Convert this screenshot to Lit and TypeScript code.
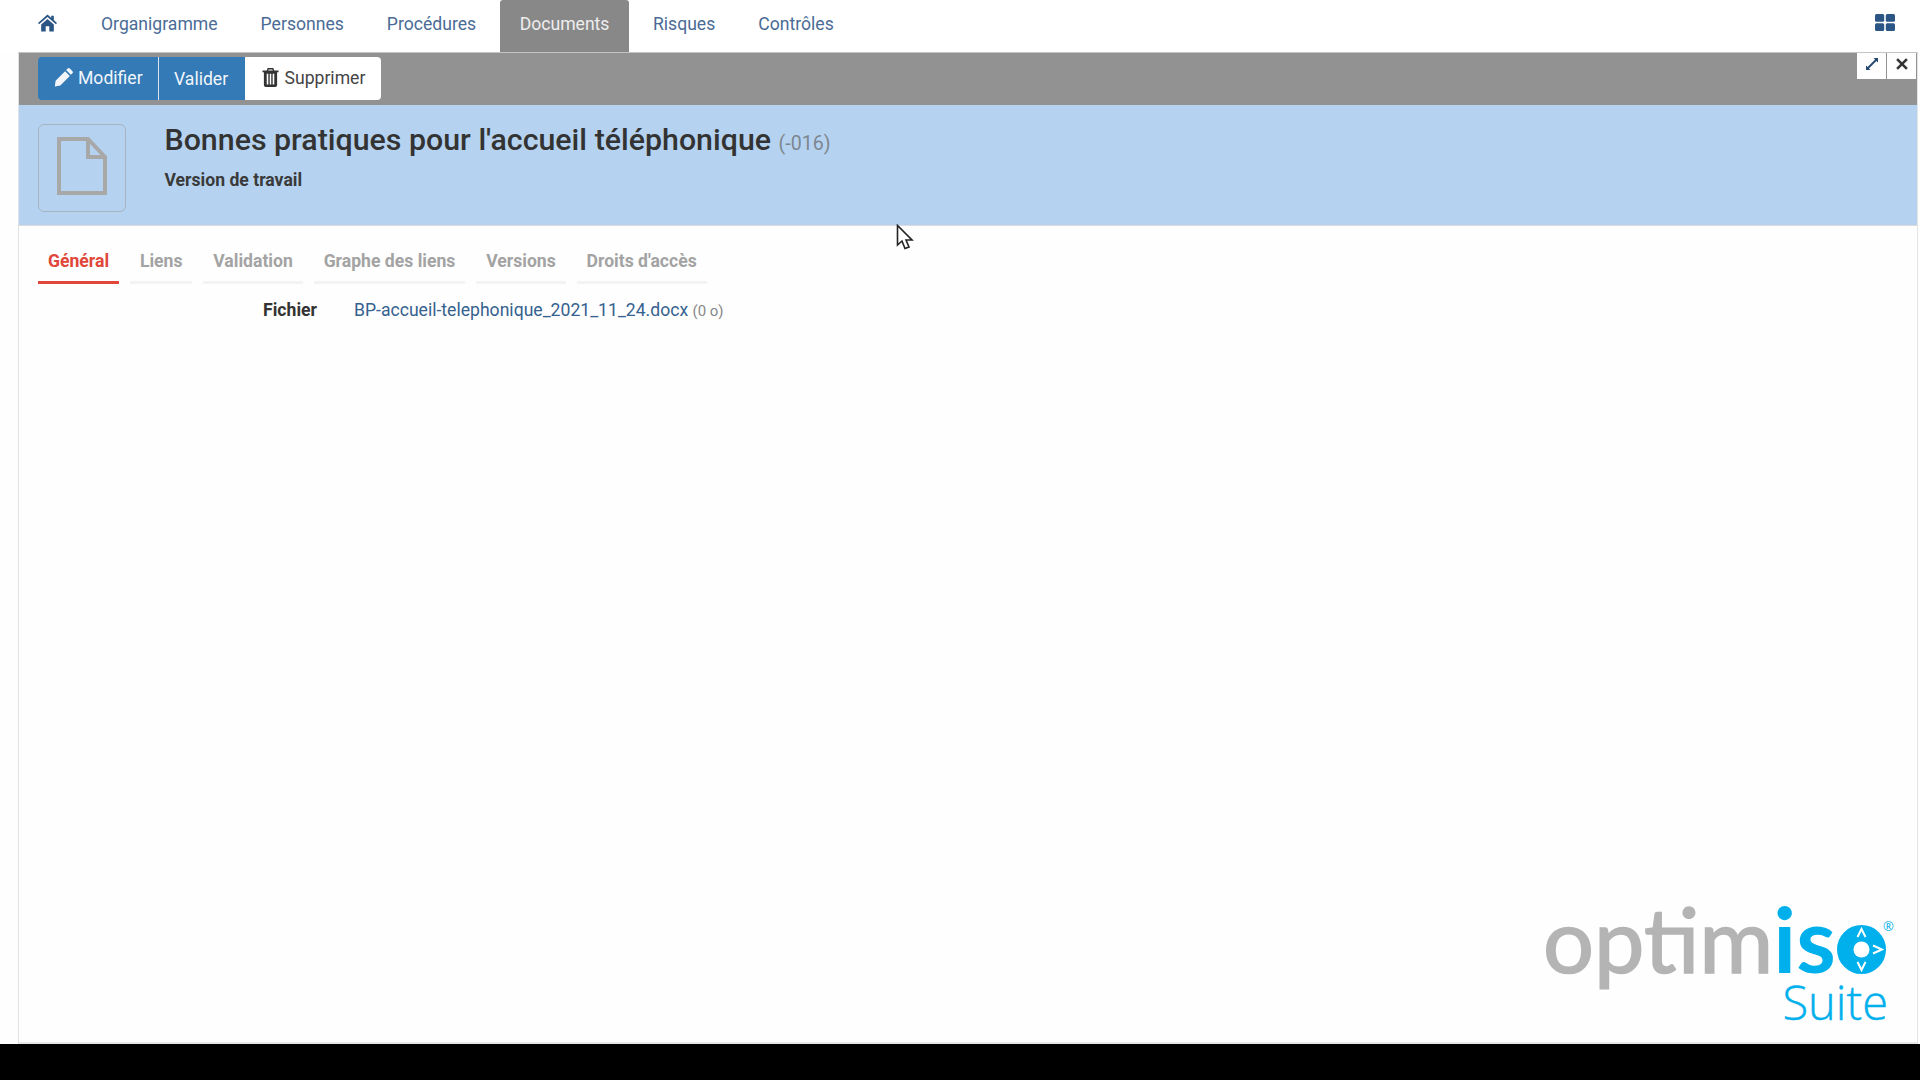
import { LitElement, html, css } from "lit";
import { customElement } from "lit/decorators.js";

const NAV = ["Organigramme", "Personnes", "Procédures", "Documents", "Risques", "Contrôles"];
const TABS = ["Général", "Liens", "Validation", "Graphe des liens", "Versions", "Droits d'accès"];

@customElement("app-root")
export class AppRoot extends LitElement {
  static styles = css`
    :host { display: block; width: 1920px; height: 1080px; overflow: hidden; position: relative; background: #000; font-family: Roboto, "Liberation Sans", sans-serif; }
    .page { height: 1044px; background: #fefefe; display: flex; flex-direction: column; }
    .nav { height: 52px; flex: none; display: flex; align-items: stretch; padding-left: 38px; background: #fff; }
    .home { width: 19px; margin-right: 24px; padding-top: 14px; }
    .home svg { width: 19px; height: 18px; fill: #2a5585; display: block; }
    .nav-item { padding: 0 20px; margin-right: 3px; font-size: 17.6px; line-height: 49px; color: #4a6b96; }
    .nav-item.active { background: #888; color: #eee; border-radius: 3px 3px 0 0; margin-left: .5px; margin-right: 3.5px; }
    .grid { margin-left: auto; margin-right: 25px; padding-top: 14px; }
    .grid svg { width: 20px; height: 17px; fill: #2a5585; display: block; }
    .panel { flex: 1; margin: 0 2px 0 18px; border-left: 1px solid #dfe3e8; border-right: 1px solid #e4e4e4; border-bottom: 2px solid #e8e8e8; border-top: 1px solid #c4c4c4; display: flex; flex-direction: column; min-height: 0; position: relative; }
    .bar { height: 52px; box-sizing: border-box; flex: none; background: #929292; padding: 4px 0 0 19px; display: flex; align-items: flex-start; }
    .btns { display: flex; height: 43px; border-radius: 4px; overflow: hidden; font-size: 17.6px; }
    .btn { display: flex; align-items: center; box-sizing: border-box; background: #337ab7; color: #f2f6fa; }
    .btn svg { fill: currentColor; flex: none; margin-top: -3px; }
    .btn span { margin-top: -2px; }
    .btn.first { width: 121px; padding-left: 16px; gap: 5px; border-right: 1px solid #dbe6f0; }
    .btn.mid { width: 86px; padding-left: 15px; }
    .btn.mid span { margin-top: 0; }
    .btn.light { background: #fff; color: #444; width: 136px; padding-left: 17px; gap: 5.5px; }
    .win { position: absolute; top: 0; right: 1px; display: flex; gap: 1px; }
    .win div { width: 29px; height: 26px; padding-bottom: 5px; box-sizing: border-box; background: #fefefe; display: flex; align-items: center; justify-content: center; }
    .win svg { width: 14px; height: 14px; }
    .head { height: 120px; flex: none; background: #b5d3f0; border-bottom: 1px solid #dcdcdc; display: flex; padding-left: 19px; }
    .doc { width: 88px; height: 88px; margin-top: 19px; padding-bottom: 4px; box-sizing: border-box; border: 1px solid #a7b4c0; border-radius: 6px; display: flex; align-items: center; justify-content: center; flex: none; }
    .doc svg { width: 50px; height: 58px; }
    .head-text { margin-left: 38.5px; padding-top: 17px; }
    h1 { margin: 0; font-weight: 500; font-size: 30.35px; line-height: 36px; color: #333; white-space: nowrap; }
    h1 small { font-weight: 400; font-size: 19.6px; color: #7d8790; }
    .sub { margin-top: 8px; font-size: 17.6px; font-weight: 700; line-height: 20px; color: #3a3a3a; }
    .tabs { display: flex; padding: 18px 0 0 19px; }
    .tab { padding: 0 10px; height: 37px; line-height: 34px; font-size: 17.6px; font-weight: 700; color: #a3a3a3; border-bottom: 3px solid #f3f3f3; margin-right: 10.8px; }
    .tab.on { color: #e0463a; border-bottom-color: #e0463a; }
    .row { display: flex; margin-top: 14px; font-size: 17.6px; line-height: 24px; }
    .label { width: 298px; text-align: right; font-weight: 700; color: #333; flex: none; }
    .val { margin-left: 37px; color: #35618f; }
    .val small { color: #888; font-size: 15px; }
    .spacer { flex: 1; }
    .logo { flex: none; align-self: flex-end; width: 345px; height: 124px; margin: 0 26px 18px 0; position: relative; }
    .logo .word { position: absolute; left: -3px; top: -2px; font-family: Lato, sans-serif; font-size: 90px; line-height: 80px; color: #b4b4b4; -webkit-text-stroke: 1.6px #b4b4b4; white-space: nowrap; }
    .logo .word b { font-weight: 700; color: #00b0ec; -webkit-text-stroke: 0; }
    .logo .suite { position: absolute; right: 3px; top: 78px; font-family: "Open Sans", sans-serif; font-size: 47px; line-height: 48px; font-weight: 300; color: #00b0ec; -webkit-text-stroke: .4px #00b0ec; }
    .logo svg { position: absolute; left: 291px; top: 25px; width: 49px; height: 49px; }
    .logo .reg { position: absolute; left: 337px; top: 18px; font-family: "Open Sans", sans-serif; font-size: 13px; line-height: 16px; color: #00b0ec; }
    .cursor { position: absolute; left: 896px; top: 224px; width: 20px; height: 28px; }
  `;

  render() {
    return html`
      <div class="page">
        <div class="nav">
          <div class="home"><svg viewBox="0 0 18 16"><path d="M9 0 L12.5 3 V1.2 H15 V5.2 L18 8 L17 9.2 L9 2.4 L1 9.2 L0 8 Z M3 9.4 L9 4.2 L15 9.4 V16 H10.7 V11 H7.3 V16 H3 Z"/></svg></div>
          ${NAV.map(n => html`<div class="nav-item ${n === "Documents" ? "active" : ""}">${n}</div>`)}
          <div class="grid"><svg viewBox="0 0 20 17"><rect width="9.2" height="7.8" rx="1.5"/><rect x="10.8" width="9.2" height="7.8" rx="1.5"/><rect y="9.2" width="9.2" height="7.8" rx="1.5"/><rect x="10.8" y="9.2" width="9.2" height="7.8" rx="1.5"/></svg></div>
        </div>
        <div class="panel">
          <div class="bar">
            <div class="btns">
              <div class="btn first"><svg width="19" height="19" viewBox="0 0 18 18"><path d="M13 .5 A1.5 1.5 0 0 1 15 .5 L17.5 3 A1.5 1.5 0 0 1 17.5 5 L16 6.5 L11.5 2 Z M10.5 3 L15 7.5 L6 16.5 L.8 17.5 L1.5 12 Z"/></svg><span>Modifier</span></div>
              <div class="btn mid"><span>Valider</span></div>
              <div class="btn light"><svg width="17" height="19" viewBox="0 0 18 20"><path d="M6 0 H12 L13 2.5 H17.5 V4.5 H16 V18 A2 2 0 0 1 14 20 H4 A2 2 0 0 1 2 18 V4.5 H.5 V2.5 H5 Z M7 1.5 L6.6 2.5 H11.4 L11 1.5 Z M5 6 V17.5 H6.7 V6 Z M8.2 6 V17.5 H9.8 V6 Z M11.3 6 V17.5 H13 V6 Z" fill="#333" fill-rule="evenodd"/></svg><span>Supprimer</span></div>
            </div>
          </div>
          <div class="win">
            <div><svg viewBox="0 0 14 14"><path d="M8.5 1 H13 V5.5 L11.4 3.9 L3.9 11.4 L5.5 13 H1 V8.5 L2.6 10.1 L10.1 2.6 Z" fill="#24476e"/></svg></div>
            <div><svg viewBox="0 0 14 14"><path d="M3 1.2 L7 5.2 L11 1.2 L12.8 3 L8.8 7 L12.8 11 L11 12.8 L7 8.8 L3 12.8 L1.2 11 L5.2 7 L1.2 3 Z" fill="#333"/></svg></div>
          </div>
          <div class="head">
            <div class="doc"><svg viewBox="0 0 50 58" fill="none" stroke="#a8a8a8" stroke-width="4"><path d="M2 2 H31 L48 20 V56 H2 Z"/><path d="M31 2 V20 H48"/></svg></div>
            <div class="head-text">
              <h1>Bonnes pratiques pour l'accueil téléphonique <small>(-016)</small></h1>
              <div class="sub">Version de travail</div>
            </div>
          </div>
          <div class="tabs">${TABS.map((t, i) => html`<div class="tab ${i === 0 ? "on" : ""}">${t}</div>`)}</div>
          <div class="row"><div class="label">Fichier</div><div class="val">BP-accueil-telephonique_2021_11_24.docx <small>(0 o)</small></div></div>
          <div class="spacer"></div>
          <div class="logo">
            <div class="word">optim<b>is</b></div>
            <svg viewBox="0 0 49 49"><circle cx="24.5" cy="24.5" r="24.5" fill="#00b0ec"/><circle cx="24.5" cy="24.5" r="8" fill="#fff"/><path d="M20.5 12 L24.5 4 L28.5 12 M20.5 37 L24.5 45 L28.5 37 M36 20.5 L45 24.5 L36 28.5" fill="none" stroke="#fff" stroke-width="2"/></svg>
            <div class="reg">®</div>
            <div class="suite">Suite</div>
          </div>
        </div>
      </div>
      <svg class="cursor" viewBox="0 0 20 28"><path d="M1.5 1.5 V21 L6 17 L9 24.5 L13 23 L10 16 H16 Z" fill="#fff" stroke="#222" stroke-width="1.6"/></svg>
    `;
  }
}
